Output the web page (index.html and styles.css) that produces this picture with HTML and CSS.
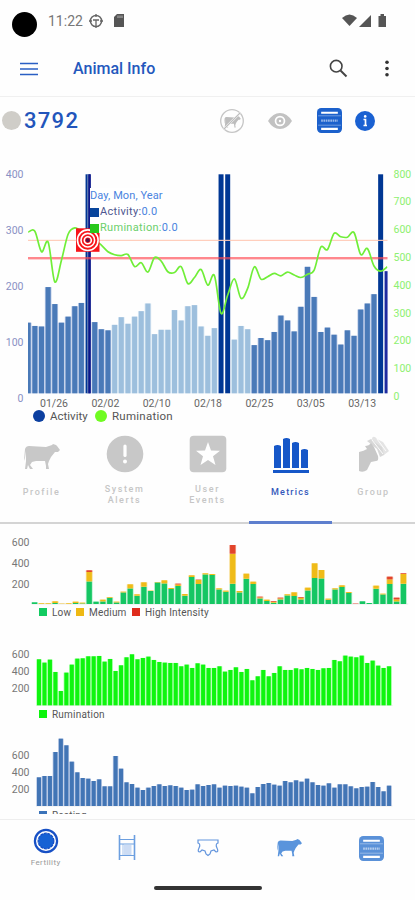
FILE: index.html
```
<!DOCTYPE html>
<html lang="en">
<head>
    <meta charset="UTF-8">
    <meta name="viewport" content="width=device-width, initial-scale=1.0">
    <title>Animal Info</title>
    <link rel="stylesheet" href="styles.css">
</head>
<body>
    <svg class="symbols" width="0" height="0">
        <symbol id="cow" viewBox="0 0 36 26">
            <path d="M1 5 Q2 2 5 2 L22 3 L28 1 L29 0 L32 1 L33 2 L36 6 L34 8 L31 8 L27 13 L25 17 L24 20 L25 25 L22 25 L22 22 L21 17 L12 17 L8 18 L6 21 L9 25 L6 25 L4 21 L3 25 L1 25 L2 17 L2 7 L1 14 L0 17 Z"/>
        </symbol>
        <symbol id="feed" viewBox="0 0 24 24">
            <rect width="24" height="24" rx="4"/>
            <path d="M4 4.5H20M4 20H20" stroke="#fff" stroke-width="2"/>
            <path d="M1 7.5H23M1 16.5H23" stroke="#fff" stroke-width=".7" opacity=".5"/>
            <path d="M4 12.2H20" stroke="#fff" stroke-width="2.2" stroke-dasharray="1.6 .6" opacity=".55"/>
        </symbol>
    </svg>

    <div class="status-bar">
        <span class="camera"></span>
        <span class="time">11:22</span>
        <svg class="status-icon" width="14" height="14" viewBox="0 0 14 14" fill="none" stroke="#666">
            <circle cx="7" cy="7" r="5.600" stroke-width="1.500"/>
            <path d="M7 0V3M7 6V14M0 7H3M11 7H14M4 6H10" stroke-width="1.300"/>
        </svg>
        <svg class="status-sd" width="10" height="13" viewBox="0 0 10 13">
            <path d="M3 0H10V13H0V3Z" fill="#555"/>
            <path d="M4 1.500V4M6 1.500V4M8 1.500V4" stroke="#ccc" stroke-width=".8"/>
        </svg>
        <svg class="status-right" width="46" height="14" viewBox="0 0 46 14" fill="#555">
            <path d="M0 4Q7.500 -3 15 4L7.500 12Z"/>
            <path d="M17 13L29 1V13Z"/>
            <path d="M36.500 2H38.500V0H42V2H44V13H36.500Z"/>
        </svg>
    </div>

    <div class="app-bar">
        <svg width="18" height="14" viewBox="0 0 18 14"><path d="M0 1.500H18M0 7H18M0 12.500H18" stroke="#2a5fc4" stroke-width="1.700"/></svg>
        <h1>Animal Info</h1>
        <svg class="search" width="19" height="19" viewBox="0 0 19 19" fill="none" stroke="#444">
            <circle cx="7.200" cy="7.200" r="5.800" stroke-width="1.600"/>
            <path d="M11.500 11.500L17.500 17.500" stroke-width="2"/>
        </svg>
        <svg width="4" height="17" viewBox="0 0 4 17" fill="#333">
            <circle cx="2" cy="2.200" r="1.800"/><circle cx="2" cy="8.500" r="1.800"/><circle cx="2" cy="14.800" r="1.800"/>
        </svg>
    </div>

    <div class="animal">
        <span class="dot"></span>
        <span class="animal-id">3792</span>
        <svg class="no-cow" width="26" height="26" viewBox="0 0 26 26">
            <circle cx="13" cy="13" r="11.300" fill="none" stroke="#c6c6c6" stroke-width="1.300"/>
            <use href="#cow" x="5" y="8" width="17" height="12" fill="#bdbdbd"/>
            <path d="M5 21L21 5" stroke="#fff" stroke-width="2"/>
            <path d="M5 21L21 5" stroke="#bdbdbd" stroke-width="1.100"/>
        </svg>
        <svg class="eye" width="24" height="16" viewBox="0 0 24 16">
            <path d="M0 8Q5 0 12 0T24 8Q19 16 12 16T0 8Z" fill="#c2c2c2"/>
            <circle cx="12" cy="8" r="5.300" fill="#fff"/>
            <circle cx="12" cy="8" r="3.600" fill="#c2c2c2"/>
            <circle cx="12" cy="8" r="1.200" fill="#fff"/>
        </svg>
        <svg class="feed" width="25" height="25" fill="#1c61cc"><use href="#feed" width="25" height="25"/></svg>
        <svg width="20" height="20" viewBox="0 0 20 20">
            <circle cx="10" cy="10" r="10" fill="#1a61d2"/>
            <path d="M8.500 8.500H10.500V14.500M8.500 14.500H12" stroke="#fff" stroke-width="1.700" fill="none"/>
            <circle cx="10.200" cy="5.400" r="1.300" fill="#fff"/>
        </svg>
    </div>

    <div class="main-chart">
        <svg id="fertility" width="415" height="250"></svg>
        <div class="tooltip">
            <div class="tip-date">Day, Mon, Year</div>
            <div class="tip-activity"><i></i><b>Activity:</b>0.0</div>
            <div class="tip-rumination"><i></i><b>Rumination:</b>0.0</div>
        </div>
    </div>
    <div class="main-legend">
        <i class="navy"></i><span class="act">Activity</span>
        <i class="lime"></i><span class="rum">Rumination</span>
    </div>

    <div class="tabs">
        <div class="tab">
            <svg width="36" height="38"><use href="#cow" y="9" width="36" height="26"/></svg>
            <span>Profile</span>
        </div>
        <div class="tab two-lines">
            <svg width="38" height="38" viewBox="0 0 38 38">
                <circle cx="19" cy="19" r="18.300"/>
                <path d="M19 11V20.500" stroke="#fff" stroke-width="3.200" stroke-linecap="round"/>
                <circle cx="19" cy="26.400" r="2" fill="#fff"/>
            </svg>
            <span>System<br>Alerts</span>
        </div>
        <div class="tab two-lines">
            <svg width="38" height="38" viewBox="0 0 38 38">
                <rect x=".7" y=".7" width="36.600" height="36.600" rx="4"/>
                <path d="M19 7L22 15.500L31 15.700L24 21.300L26.500 30L19 25L11.500 30L14 21.300L7 15.700L16 15.500Z" fill="#fff"/>
            </svg>
            <span>User<br>Events</span>
        </div>
        <div class="tab active">
            <svg width="36" height="38" viewBox="0 0 36 38">
                <path d="M1 11Q4.500 9 8 11V33H1ZM10 4Q13.500 2 17 4V33H10ZM19 8Q22.500 6 26 8V33H19ZM28 15Q31.500 13 35 15V33H28ZM0 35H36V38H0Z"/>
            </svg>
            <span>Metrics</span>
        </div>
        <div class="tab">
            <svg width="30" height="38" viewBox="0 0 30 38">
                <path d="M13 3Q15 0 18 4L24 7L30 16L25 20L19 14L14 9Z" fill="#e4e4e4"/>
                <path d="M8 6L12 4L17 8L23 12L25 20L21 22L18 14Z" fill="#d8d8d8"/>
                <path d="M0 17Q5 16 8 14L6 11Q10 11 12 8L15 12L19 21Q20 26 17 26L12 27L8 35Q4 38 0 36Z"/>
                <path d="M13 5L24 19M18 4L27 16" stroke="#fff" stroke-width=".9"/>
            </svg>
            <span>Group</span>
        </div>
    </div>

    <div class="metrics">
        <svg id="intensity" width="415" height="81"></svg>
        <div class="legend">
            <i class="green"></i><span class="low">Low</span>
            <i class="amber"></i><span class="medium">Medium</span>
            <i class="red"></i><span>High Intensity</span>
        </div>
        <svg id="rumination" class="second" width="415" height="67"></svg>
        <div class="legend"><i class="bright"></i><span>Rumination</span></div>
        <svg id="resting" class="third" width="415" height="81"></svg>
        <div class="legend"><i class="blue"></i><span>Resting</span></div>
    </div>

    <div class="bottom-nav">
        <div class="nav-item current">
            <svg width="26" height="26" viewBox="0 0 26 26" fill="none" stroke="#1750c5">
                <circle cx="13" cy="13" r="11.100" stroke-width="2.200"/>
                <circle cx="13" cy="13" r="7.800" fill="#1762d4" stroke-width="1.300" stroke-dasharray="3 .8"/>
            </svg>
            <span>Fertility</span>
        </div>
        <div class="nav-item">
            <svg width="18" height="26" viewBox="0 0 18 26" fill="none" stroke="#6c9fe0">
                <path d="M1.500 0V25M16.500 0V25" stroke-width="1.600"/>
                <path d="M1 4.500H17M1 9H17M1 20.500H17" stroke-width="1.100"/>
                <rect x="6" y="10" width="7.500" height="10" fill="#ccdcf4" stroke="none"/>
                <path d="M5 9V20" stroke-width=".6"/>
            </svg>
        </div>
        <div class="nav-item">
            <svg width="22" height="18" viewBox="0 0 22 18" fill="none" stroke="#6395dd" stroke-width="1.200">
                <path d="M1 1H21V4Q18 5 20 9Q22 13 19 13L17 11L14 12L13 15L11 16.500L9 15L8 12L5 11L3 13Q0 13 2 9Q4 5 1 4Z"/>
            </svg>
        </div>
        <div class="nav-item">
            <svg width="25" height="18" fill="#5a94dc"><use href="#cow" width="25" height="18"/></svg>
        </div>
        <div class="nav-item">
            <svg width="25" height="25" fill="#5a91d8"><use href="#feed" width="25" height="25"/></svg>
        </div>
    </div>
    <div class="home-bar"></div>

    <script src="charts.js"></script>
</body>
</html>
```
FILE: styles.css
```
body {
    margin: 0;
    width: 415px;
    height: 900px;
    overflow: hidden;
    background: #fefefe;
    font-family: Roboto, "Liberation Sans", sans-serif;
}
svg {
    display: block;
    flex: none;
}
.symbols {
    position: absolute;
}
.status-bar {
    display: flex;
    align-items: center;
    height: 41px;
    padding: 0 27px 0 12px;
}
.camera {
    width: 25px;
    height: 25px;
    margin-top: 8px;
    border-radius: 50%;
    background: #000;
}
.time {
    width: 41px;
    margin-left: 11px;
    font-size: 14px;
    color: #777;
}
.status-sd {
    margin-left: 11px;
}
.status-right {
    margin-left: auto;
}
.app-bar {
    display: flex;
    align-items: center;
    height: 55px;
    padding: 0 26px 0 20px;
    border-bottom: 1px solid #f0f0f0;
}
.app-bar h1 {
    margin: 0 0 0 35px;
    font-size: 16px;
    font-weight: 500;
    color: #2458bd;
}
.search {
    margin: 0 37px 0 auto;
}
.animal {
    display: flex;
    align-items: center;
    height: 47px;
    padding: 0 40px 0 2px;
}
.dot {
    width: 19px;
    height: 19px;
    border-radius: 50%;
    background: #cfcdc8;
}
.animal-id {
    margin-left: 3px;
    font-size: 22px;
    font-weight: 500;
    letter-spacing: 1.3px;
    color: #2255bb;
}
.no-cow {
    margin-left: auto;
}
.eye {
    margin: 0 25px 0 23px;
}
.feed {
    margin-right: 13px;
}
.main-chart {
    position: relative;
    height: 250px;
    margin-top: 16px;
}
svg text {
    font-size: 10.5px;
}
.tooltip {
    position: absolute;
    left: 90px;
    top: 28px;
    width: 93px;
    height: 45px;
    background: linear-gradient(90deg, #fff 50%, rgba(255, 255, 255, 0));
    font-size: 11px;
    line-height: 16px;
    color: #4a84e0;
    white-space: nowrap;
}
.tooltip div {
    display: flex;
    align-items: center;
}
.tooltip b {
    font-weight: 400;
}
.tooltip i {
    width: 9px;
    height: 9px;
    margin-right: 1px;
    background: #08459c;
}
.tip-date {
    letter-spacing: .1px;
}
.tip-activity,
.tip-rumination {
    letter-spacing: .3px;
}
.tip-activity b {
    color: #4e5690;
}
.tip-rumination b {
    color: #6ccf6c;
}
.tooltip .tip-rumination i {
    background: #28c81c;
}
.main-legend {
    display: flex;
    align-items: center;
    height: 11px;
    padding-left: 33px;
    font-size: 11.5px;
    color: #555;
}
.main-legend i {
    width: 12px;
    height: 12px;
    margin-right: 5px;
    border-radius: 50%;
}
.main-legend span {
    width: 45px;
    white-space: nowrap;
}
.main-legend .rum {
    letter-spacing: .25px;
}
.navy { background: #0c3fa0; }
.lime { background: #70fb22; }
.tabs {
    display: grid;
    grid-template-columns: repeat(5, 1fr);
    height: 87px;
    padding-top: 14px;
    border-bottom: 2px solid #d4d4d4;
}
.tab {
    display: flex;
    flex-direction: column;
    align-items: center;
    height: 86px;
    border-bottom: 3px solid transparent;
    fill: #c8c8c8;
    color: #c6c6c6;
    font-size: 9px;
    font-weight: 500;
    line-height: 11px;
    letter-spacing: 1.6px;
    text-align: center;
}
.tab span {
    margin-top: 14px;
}
.two-lines span {
    margin-top: 11px;
}
.active {
    border-color: #5e7fce;
    fill: #1657c8;
    color: #3458bb;
    letter-spacing: 1.2px;
}
.metrics {
    height: 290px;
    overflow: hidden;
}
.legend {
    display: flex;
    align-items: center;
    height: 14px;
    padding-left: 39px;
    font-size: 10px;
    letter-spacing: .2px;
    color: #555;
}
.legend i {
    width: 8px;
    height: 8px;
    margin-right: 5px;
}
.low { width: 24px; }
.medium { width: 43px; }
.green { background: #12cb61; }
.amber { background: #eeb914; }
.red { background: #df2c1c; }
.bright { background: #0cf50c; }
.blue { background: #3b73b9; }
.second {
    margin-top: 21px;
}
.third {
    margin-top: 6px;
}
.bottom-nav {
    display: grid;
    grid-template-columns: repeat(5, 81.4px);
    height: 66px;
    margin-top: 5px;
    padding-left: 5px;
    border-top: 1px solid #eee;
}
.nav-item {
    display: flex;
    flex-direction: column;
    align-items: center;
    justify-content: center;
    height: 56px;
}
.current {
    height: 54px;
    font-size: 8px;
    letter-spacing: .4px;
    color: #999;
}
.current span {
    margin-top: 4px;
}
.home-bar {
    width: 108px;
    height: 4px;
    margin-left: 154px;
    border-radius: 2px;
    background: #333;
}
```
FILE: charts.js
```
const activity = [129, 123, 122, 194, 163, 129, 140, 159, 165, 400, 130, 117, 115, 125, 139, 127, 140, 150, 164, 108, 116, 116, 152, 133, 159, 161, 122, 105, 119, 400, 400, 98, 123, 117, 88, 101, 97, 112, 142, 133, 113, 158, 231, 176, 112, 120, 107, 89, 115, 105, 153, 164, 181, 400, 223];
const ruminationLine = [589, 592, 517, 552, 407, 486, 581, 604, 590, 559, 559, 541, 517, 506, 503, 507, 463, 477, 443, 496, 483, 444, 441, 463, 401, 423, 452, 395, 430, 292, 359, 418, 347, 383, 462, 417, 426, 438, 429, 443, 432, 423, 435, 450, 534, 525, 584, 572, 570, 587, 507, 529, 465, 446, 462];

// [low, medium, high] bar parts, in thirds of a pixel
const intensity = [[5], [0, 2], [0, 2], [3, 5], [0, 1], [0, 2], [3, 4], [2, 2], [68, 28, 5], [7], [8, 5], [19, 2], [5, 2], [35, 2], [47, 12], [25, 4], [52, 13], [39, 1], [65, 1], [62, 9], [45, 3], [54, 5, 2], [25, 5], [81, 5], [60, 12, 1], [89, 3], [87, 3], [44, 3], [37, 3], [61, 90, 26], [35, 4], [76, 15], [60, 7], [17, 3, 2], [9, 4], [4, 3, 2], [14, 3, 2], [26, 3], [24, 11], [14, 5, 2], [41, 8], [78, 44], [77, 25], [13, 3], [44, 3], [51, 5], [33, 3], [0, 0, 1], [8], [3], [46, 9], [29, 2], [60, 14, 8], [8, 6, 5], [61, 29, 2]];
const rumination = [138, 128, 137, 100, 43, 98, 122, 140, 141, 147, 147, 148, 131, 139, 103, 120, 144, 153, 138, 142, 146, 136, 130, 128, 127, 127, 117, 122, 112, 126, 122, 112, 112, 117, 101, 106, 114, 100, 109, 75, 87, 106, 87, 97, 117, 106, 106, 111, 108, 112, 109, 106, 111, 112, 136, 132, 149, 146, 144, 149, 127, 134, 119, 112, 117];
const resting = [86, 90, 90, 162, 202, 182, 133, 101, 84, 82, 75, 80, 59, 59, 150, 112, 71, 66, 55, 48, 55, 60, 65, 60, 62, 60, 55, 48, 49, 65, 60, 63, 65, 55, 61, 60, 61, 58, 55, 38, 57, 66, 69, 64, 61, 75, 71, 77, 73, 82, 71, 63, 61, 68, 55, 65, 65, 59, 53, 57, 58, 72, 57, 44, 61];

function rect(x, y, w, h, fill) {
    return `<rect x="${x.toFixed(2)}" y="${y.toFixed(2)}" width="${w}" height="${h.toFixed(2)}" fill="${fill}"/>`;
}

function label(x, y, text, fill, anchor) {
    return `<text x="${x}" y="${y}" fill="${fill}" text-anchor="${anchor}">${text}</text>`;
}

function drawFertility() {
    const base = 233.3, height = 219;
    const x = i => 28.2 + i * 6.65;
    let out = '<clipPath id="plot"><rect x="28" y="0" width="359.5" height="240"/></clipPath><g clip-path="url(#plot)">';

    activity.forEach((value, i) => {
        const h = value / 400 * height;
        let color = '#4a7ab8', gap = '#b9c9e6';
        if (i > 12 && i < 34) { color = '#9dbfdd'; gap = '#dceaf5'; }
        if (value === 400) { color = '#003794'; gap = '#fff'; }
        if (i === 54) color = '#1e2aa0';
        out += rect(x(i) - 3.3, base - h, 6.6, h, gap);
        out += rect(x(i) - 2.5, base - h, 5, h, color);
    });
    out += rect(x(9) - .6, base - height, .9, height, '#a8aac8');
    out += rect(x(9) + .4, base - height, 2.3, height, '#10158a');

    // threshold lines
    out += rect(28, 79.8, 360, 1.1, '#ffc9b5');
    out += rect(28, 97, 360, 2.4, 'rgba(255, 70, 80, .65)');

    // smooth line through the points
    const pts = ruminationLine.map((v, i) => [x(i), base - v / 800 * height]);
    let d = `M${pts[0]}`;
    for (let i = 1; i < pts.length; i++) {
        const a = pts[i - 2] || pts[i - 1], b = pts[i - 1], c = pts[i], e = pts[i + 1] || c;
        d += `C${b[0] + (c[0] - a[0]) / 6},${b[1] + (c[1] - a[1]) / 6} ${c[0] - (e[0] - b[0]) / 6},${c[1] - (e[1] - b[1]) / 6} ${c}`;
    }
    out += `<path d="${d}" fill="none" stroke="#70ee38" stroke-width="1.7"/></g>`;

    // selected point marker
    out += rect(76, 68.3, 23.5, 23.5, '#f8151b');
    [10.3, 6.8, 3.5].forEach(r => {
        out += `<circle cx="87.8" cy="80.2" r="${r}" fill="none" stroke="#fff" stroke-width="1.6"/>`;
    });
    out += '<circle cx="87.8" cy="80.2" r="2" fill="#5a1048"/>';

    for (let i = 0; i <= 4; i++) out += label(23.5, 17.5 + i * 56.1, 400 - i * 100, '#8990c4', 'end');
    for (let i = 0; i <= 8; i++) out += label(393.5, 17.5 + i * 27.8, 800 - i * 100, '#8df070', 'start');
    ['01/26', '02/02', '02/10', '02/18', '02/25', '03/05', '03/13'].forEach((day, i) => {
        out += label(54 + i * 51.35, 247, day, '#666', 'middle');
    });
    document.getElementById('fertility').innerHTML = out;
}

function drawSmall(id, data, base, start, step, width, colors, firstLabel, labelStep) {
    let out = rect(start - 3, base - .3, data.length * step + 1, .6, '#ddd');
    data.forEach((parts, i) => {
        let y = base;
        [].concat(parts).forEach((part, k) => {
            const h = part / 3;
            y -= h;
            out += rect(start + i * step - step / 2, y, step, h, colors[k][1]);
            out += rect(start + i * step - width / 2, y, width, h, colors[k][0]);
        });
    });
    [600, 400, 200].forEach((n, i) => {
        out += label(29.5, firstLabel + i * labelStep, n, '#777', 'end');
    });
    document.getElementById(id).innerHTML = out;
}

drawFertility();
drawSmall('intensity', intensity, 80, 34.6, 6.83, 5.2, [['#15c663', '#b5eecd'], ['#efbb18', '#f8dd90'], ['#e2442b', '#f0a090']], 22, 21);
drawSmall('rumination', rumination, 65.3, 39, 5.47, 4, [['#0ff50f', '#a8ffa8']], 17.5, 17.3);
drawSmall('resting', resting, 79, 39, 5.47, 4, [['#4275b5', '#b5c6e4']], 32, 17);
```
